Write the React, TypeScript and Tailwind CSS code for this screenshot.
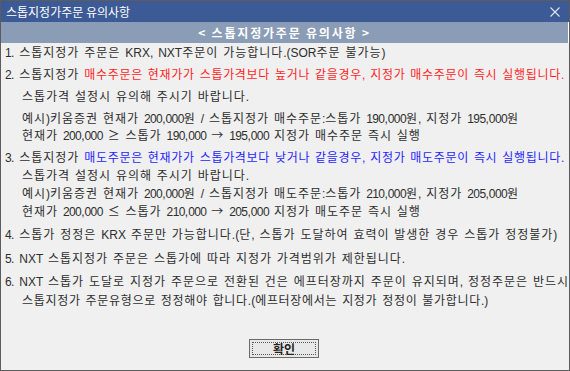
import React from 'react';

// Dialog font: hangul on a 12px grid, latin with Arial-like widths, slightly wide spaces, narrow digits
const T = ({ s, tight = false }: { s: string; tight?: boolean }) => (
  <>
    {s.split(/([0-9]+|[\x20-\x2F\x3A-\x7E]+)/).map((part, i) => {
      if (part === '') return null;
      if (/^[0-9]+$/.test(part))
        return (
          <span key={i} className="font-['Liberation_Sans'] tracking-[-0.6px]">
            {part}
          </span>
        );
      if (/^[\x20-\x7E]+$/.test(part))
        return (
          <span key={i} className="font-['Liberation_Sans'] [word-spacing:1.6px]">
            {part}
          </span>
        );
      return (
        <span key={i} className={tight ? 'tracking-[0.68px]' : 'tracking-[0.96px]'}>
          {part}
        </span>
      );
    })}
  </>
);

const Line = ({ className = '', children }: { className?: string; children: React.ReactNode }) => (
  <div className={`h-[16px] leading-[16px] whitespace-pre ${className}`}>{children}</div>
);

export default function App() {
  return (
    <div className="w-[570px] h-[371px] border border-[#5c5c5c] bg-[#f0f0f0] flex flex-col font-['Noto_Sans_CJK_KR',sans-serif] text-[12px] text-[#2e2e2e] overflow-hidden">
      {/* title bar */}
      <div className="h-[21px] shrink-0 bg-[#3c5a96] flex items-center justify-between pl-[5px] pr-[9px] text-white text-[12px]">
        <span className="leading-[21px] whitespace-pre">스톱지정가주문 유의사항</span>
        <svg width="10" height="10" viewBox="0 0 10 10" className="text-[#dfe6f2]">
          <path d="M0.5 0.5 L9.5 9.5 M9.5 0.5 L0.5 9.5" stroke="currentColor" strokeWidth="1.1" />
        </svg>
      </div>

      {/* header */}
      <div className="h-[21px] shrink-0 bg-[#8a9cb6] border-r border-white flex items-center justify-center font-bold text-white text-[12px] tracking-[1.8px] whitespace-pre">
        &lt; 스톱지정가주문 유의사항 &gt;
      </div>

      <div className="flex flex-col pl-[4px]">
        <Line className="mt-[1px]"><T s="1. 스톱지정가 주문은 KRX, NXT주문이 가능합니다.(SOR주문 불가능)" /></Line>
        <Line className="mt-[6px]">
          <T s="2. 스톱지정가 " />
          <span className="text-[#ff1f1f]"><T tight s="매수주문은 현재가가 스톱가격보다 높거나 같을경우, 지정가 매수주문이 즉시 실행됩니다." /></span>
        </Line>
        <Line className="mt-[6px] pl-[17px]"><T s="스톱가격 설정시 유의해 주시기 바랍니다." /></Line>
        <Line className="mt-[6px] pl-[17px]"><T s="예시)키움증권 현재가 200,000원 / 스톱지정가 매수주문:스톱가 190,000원, 지정가 195,000원" /></Line>
        <Line className="mt-[1px] pl-[17px]"><T s="현재가 200,000 ≥ 스톱가 190,000 → 195,000 지정가 매수주문 즉시 실행" /></Line>
        <Line className="mt-[6px]">
          <T s="3. 스톱지정가 " />
          <span className="text-[#1f1fff]"><T tight s="매도주문은 현재가가 스톱가격보다 낮거나 같을경우, 지정가 매도주문이 즉시 실행됩니다." /></span>
        </Line>
        <Line className="mt-[2px] pl-[17px]"><T s="스톱가격 설정시 유의해 주시기 바랍니다." /></Line>
        <Line className="mt-[2px] pl-[17px]"><T s="예시)키움증권 현재가 200,000원 / 스톱지정가 매도주문:스톱가 210,000원, 지정가 205,000원" /></Line>
        <Line className="mt-[2px] pl-[17px]"><T s="현재가 200,000 ≤ 스톱가 210,000 → 205,000 지정가 매도주문 즉시 실행" /></Line>
        <Line className="mt-[7px]"><T s="4. 스톱가 정정은 KRX 주문만 가능합니다.(단, 스톱가 도달하여 효력이 발생한 경우 스톱가 정정불가)" /></Line>
        <Line className="mt-[8px]"><T s="5. NXT 스톱지정가 주문은 스톱가에 따라 지정가 가격범위가 제한됩니다." /></Line>
        <Line className="mt-[7px]"><T s="6. NXT 스톱가 도달로 지정가 주문으로 전환된 건은 에프터장까지 주문이 유지되며, 정정주문은 반드시" /></Line>
        <Line className="mt-[3px] pl-[17px]"><T tight s="스톱지정가 주문유형으로 정정해야 합니다.(에프터장에서는 지정가 정정이 불가합니다.)" /></Line>
      </div>

      <div className="flex justify-center mt-[31px] pr-[2px]">
        <button className="w-[70px] h-[19px] bg-[#e8e8e8] border border-[#6a6a6a] p-[2px] flex">
          <span className="flex-1 border border-dotted border-[#555] flex items-center justify-center font-bold text-[12px] text-[#222] leading-none">
            확인
          </span>
        </button>
      </div>
    </div>
  );
}
